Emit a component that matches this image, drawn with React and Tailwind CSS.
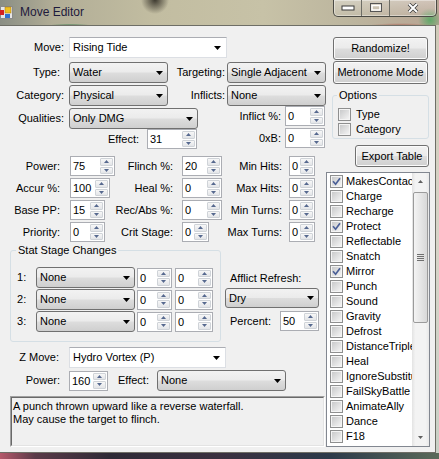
import React from "react";

const face = "bg-[linear-gradient(#f2f2f2,#ebebeb_48%,#dddddd_52%,#cfcfcf)]";

function DownArrow() {
  return (
    <svg width="7" height="4" viewBox="0 0 7 4" className="shrink-0">
      <path d="M0 0H7L3.5 4Z" fill="#000" />
    </svg>
  );
}

function DropList({ className, value }) {
  return (
    <div className={`flex shrink-0 items-center justify-between rounded-[3px] border border-[#707070] ${face} pl-[3px] pr-[4px] ${className}`}>
      <span className="whitespace-nowrap">{value}</span>
      <DownArrow />
    </div>
  );
}

function EditCombo({ className, value }) {
  return (
    <div className={`flex h-[21px] shrink-0 items-center justify-between border border-[#dcdfe4] border-t-[#abadb3] bg-white pl-[3px] pr-[5px] ${className}`}>
      <span className="whitespace-nowrap">{value}</span>
      <DownArrow />
    </div>
  );
}

function Spin({ up }) {
  return (
    <div className="flex flex-1 items-center justify-center rounded-[1px] border border-[#cfd3d8] bg-[linear-gradient(#f7f7f7,#e3e5e8)]">
      <svg width="5" height="3" viewBox="0 0 5 3">
        <path d={up ? "M0 3H5L2.5 0Z" : "M0 0H5L2.5 3Z"} fill="#56698f" />
      </svg>
    </div>
  );
}

function Nud({ className, value }) {
  return (
    <div className={`flex h-[20px] shrink-0 border border-[#abadb3] bg-white ${className}`}>
      <span className="flex-1 pl-[2px] leading-[18px]">{value}</span>
      <div className="flex w-[15px] flex-col gap-[1px] p-[1px]">
        <Spin up />
        <Spin />
      </div>
    </div>
  );
}

function Check({ checked }) {
  return (
    <span className="flex h-[13px] w-[13px] shrink-0 items-center justify-center border border-[#8e8f8f] bg-[#f4f4f4]">
      <span className="flex h-[9px] w-[9px] items-center justify-center bg-[linear-gradient(135deg,#c9cacb,#f3f3f3)]">
        {checked && (
          <svg width="9" height="9" viewBox="0 0 9 9">
            <path d="M1 4.3L3.6 7.2L8 1.2" fill="none" stroke="#4a5f97" strokeWidth="1.7" />
          </svg>
        )}
      </span>
    </span>
  );
}

function Btn({ className, children }) {
  return (
    <div className={`flex shrink-0 items-center justify-center rounded-[3px] border border-[#707070] ${face} shadow-[inset_0_0_0_1px_#fbfbfb] ${className}`}>
      {children}
    </div>
  );
}

const stats = [
  [["Power:", "75", "w-[45px]"], ["Flinch %:", "20", "w-[40px]"], ["Min Hits:", "0"]],
  [["Accur %:", "100", "w-[40px]"], ["Heal %:", "0", "w-[40px]"], ["Max Hits:", "0"]],
  [["Base PP:", "15", "w-[35px]"], ["Rec/Abs %:", "0", "w-[40px]"], ["Min Turns:", "0"]],
  [["Priority:", "0", "w-[35px]"], ["Crit Stage:", "0", "w-[27px]"], ["Max Turns:", "0"]],
];

const flags = [
  ["MakesContact", true],
  ["Charge"],
  ["Recharge"],
  ["Protect", true],
  ["Reflectable"],
  ["Snatch"],
  ["Mirror", true],
  ["Punch"],
  ["Sound"],
  ["Gravity"],
  ["Defrost"],
  ["DistanceTriple"],
  ["Heal"],
  ["IgnoreSubstitute"],
  ["FailSkyBattle"],
  ["AnimateAlly"],
  ["Dance"],
  ["F18"],
];

function TitleBar() {
  return (
    <div className="flex h-[25px] items-start bg-[radial-gradient(circle_at_155px_0px,#3e3a30_0px,transparent_14px),radial-gradient(ellipse_at_400px_25px,#b07a6a_0px,transparent_30px),radial-gradient(circle_at_430px_20px,#5fa868_0px,transparent_12px),radial-gradient(ellipse_at_70px_25px,#5a8a62_0px,transparent_20px),linear-gradient(to_right,#8a8e84,#b1ad96_12%,#c2bda1_35%,#c7c2a7_60%,#bcb59e_80%,#b8a493)]">
      <svg width="13" height="13" viewBox="0 0 13 13" className="mt-[6px] shrink-0">
        <rect x="0.5" y="0.5" width="12" height="12" fill="#e6e6e6" stroke="#8a8a8a" />
        <rect x="0" y="4" width="4" height="5" fill="#d42020" />
        <rect x="5" y="1" width="6" height="6" fill="#f0c020" stroke="#a07010" strokeWidth="0.5" />
        <rect x="5" y="8" width="5" height="4" fill="#3070d0" />
      </svg>
      <span className="ml-[7px] mt-[5px] text-[12px] leading-[14px] text-[#1e1a3c]">Move Editor</span>
      <div className="ml-auto mr-[2px] flex h-[17px] overflow-hidden rounded-b-[5px] border border-t-0 border-[#4b4b45] bg-[linear-gradient(#ffffff59,#ffffff1a)] shadow-[inset_0_0_0_1px_#ffffff66]">
        <div className="flex w-[28px] items-center justify-center border-r border-[#6d6d66]">
          <svg width="14" height="6" viewBox="0 0 14 6">
            <rect x="1" y="1" width="12" height="4" fill="#fff" stroke="#3a3a3a" />
          </svg>
        </div>
        <div className="flex w-[28px] items-start justify-center border-r border-[#6d6d66] pt-[3px]">
          <svg width="12" height="9" viewBox="0 0 12 9">
            <rect x="0.5" y="0.5" width="11" height="8" fill="none" stroke="#555" />
            <rect x="2" y="2.5" width="8" height="4.5" fill="none" stroke="#fff" strokeWidth="1.5" />
          </svg>
        </div>
        <div className="flex w-[46px] items-start justify-center pt-[3px]">
          <svg width="12" height="10" viewBox="0 0 12 10">
            <path d="M2 1L10 9M10 1L2 9" stroke="#3a3a3a" strokeWidth="3.5" />
            <path d="M2 1L10 9M10 1L2 9" stroke="#fff" strokeWidth="2" />
          </svg>
        </div>
      </div>
    </div>
  );
}

function LeftColumn() {
  return (
    <div className="flex w-[326px] flex-col">
      <div className="mt-[11px] flex h-[21px] items-center">
        <span className="w-[64px] text-right">Move:</span>
        <EditCombo className="ml-[5px] w-[158px]" value="Rising Tide" />
      </div>
      <div className="mt-[4px] flex h-[21px] items-center">
        <span className="w-[60px] text-right">Type:</span>
        <DropList className="ml-[9px] h-[21px] w-[99px]" value="Water" />
        <span className="w-[57px] text-right">Targeting:</span>
        <DropList className="ml-[2px] h-[21px] w-[99px]" value="Single Adjacent" />
      </div>
      <div className="mt-[2px] flex h-[21px] items-center">
        <span className="w-[64px] text-right">Category:</span>
        <DropList className="ml-[5px] h-[21px] w-[99px]" value="Physical" />
        <span className="w-[57px] text-right">Inflicts:</span>
        <DropList className="ml-[2px] h-[21px] w-[99px]" value="None" />
      </div>

      <div className="flex">
        <div className="flex w-[226px] flex-col">
          <div className="mt-[2px] flex h-[21px] items-center">
            <span className="w-[64px] text-right">Qualities:</span>
            <DropList className="ml-[5px] h-[21px] w-[129px]" value="Only DMG" />
          </div>
          <div className="flex h-[20px] items-center">
            <span className="w-[139px] text-right">Effect:</span>
            <Nud className="ml-[8px] w-[50px]" value="31" />
          </div>
        </div>
        <div className="flex flex-col">
          <div className="flex h-[20px] items-center">
            <span className="w-[55px] text-right">Inflict %:</span>
            <Nud className="ml-[4px] w-[40px]" value="0" />
          </div>
          <div className="mt-[2px] flex h-[20px] items-center">
            <span className="w-[55px] text-right">0xB:</span>
            <Nud className="ml-[4px] w-[40px]" value="0" />
          </div>
        </div>
      </div>

      <div className="mt-[7px] flex flex-col gap-[2px]">
        {stats.map(([a, b, c]) => (
          <div key={a[0]} className="flex h-[20px] items-center">
            <div className="flex w-[115px] items-center">
              <span className="w-[60px] text-right">{a[0]}</span>
              <Nud className={`ml-[10px] ${a[2]}`} value={a[1]} />
            </div>
            <div className="flex w-[111px] items-center">
              <span className="w-[58px] text-right">{b[0]}</span>
              <Nud className={`ml-[9px] ${b[2]}`} value={b[1]} />
            </div>
            <div className="flex items-center">
              <span className="w-[56px] text-right">{c[0]}</span>
              <Nud className="ml-[7px] w-[26px]" value={c[1]} />
            </div>
          </div>
        ))}
      </div>

      <div className="mt-[2px] flex">
        <fieldset className="ml-[10px] w-[211px] rounded-[3px] border border-[#d5dfe5] pb-[9px]">
          <legend className="ml-[5px] px-[2px]">Stat Stage Changes</legend>
          <div className="mt-[10px] flex flex-col gap-[1px]">
            {[1, 2, 3].map((n) => (
              <div key={n} className="flex h-[21px] items-center">
                <span className="ml-[6px] w-[19px]">{n}:</span>
                <DropList className="h-[21px] w-[99px]" value="None" />
                <Nud className="ml-[2px] w-[35px]" value="0" />
                <Nud className="ml-[3px] w-[38px]" value="0" />
              </div>
            ))}
          </div>
        </fieldset>
        <div className="ml-[4px] flex flex-col">
          <span className="mt-[28px] pl-[5px]">Afflict Refresh:</span>
          <DropList className="mt-[3px] h-[20px] w-[94px]" value="Dry" />
          <div className="mt-[3px] flex h-[20px] items-center">
            <span className="w-[55px] pl-[5px]">Percent:</span>
            <Nud className="w-[39px]" value="50" />
          </div>
        </div>
      </div>

      <div className="mt-[5px] flex h-[21px] items-center">
        <span className="w-[59px] text-right">Z Move:</span>
        <EditCombo className="ml-[10px] w-[157px]" value="Hydro Vortex (P)" />
      </div>
      <div className="mt-[2px] flex h-[21px] items-center">
        <span className="w-[60px] text-right">Power:</span>
        <Nud className="ml-[9px] w-[39px]" value="160" />
        <span className="ml-[10px] w-[39px]">Effect:</span>
        <DropList className="h-[21px] w-[129px]" value="None" />
      </div>
      <div className="ml-[10px] mt-[5px] h-[51px] w-[315px] border border-b-white border-l-[#a0a0a0] border-r-white border-t-[#a0a0a0]">
        <div className="h-full border border-b-[#e3e3e3] border-l-[#696969] border-r-[#e3e3e3] border-t-[#696969] pl-[1px] pt-[2px]">
          <p>A punch thrown upward like a reverse waterfall.</p>
          <p>May cause the target to flinch.</p>
        </div>
      </div>
    </div>
  );
}

function ScrollArrow({ up }) {
  return (
    <div className="flex h-[17px] items-center justify-center">
      <svg width="5" height="3" viewBox="0 0 5 3">
        <path d={up ? "M0 3H5L2.5 0Z" : "M0 0H5L2.5 3Z"} fill="#606060" />
      </svg>
    </div>
  );
}

function RightColumn() {
  return (
    <div className="flex w-[109px] flex-col">
      <Btn className="ml-[7px] mt-[11px] h-[23px] w-[95px]">Randomize!</Btn>
      <Btn className="ml-[7px] mt-[1px] h-[23px] w-[95px]">Metronome Mode</Btn>
      <fieldset className="ml-[6px] mt-[5px] w-[97px] rounded-[3px] border border-[#d5dfe5] pb-[2px]">
        <legend className="ml-[4px] px-[2px]">Options</legend>
        <div className="ml-[5px] mt-[6px] flex flex-col gap-[2px]">
          <div className="flex h-[13px] items-center">
            <Check />
            <span className="ml-[5px]">Type</span>
          </div>
          <div className="flex h-[13px] items-center">
            <Check />
            <span className="ml-[5px]">Category</span>
          </div>
        </div>
      </fieldset>
      <Btn className="ml-[29px] mt-[6px] h-[22px] w-[74px]">Export Table</Btn>
      <div className="mt-[5px] flex h-[275px] w-[104px] border border-[#828790] bg-white">
        <div className="flex min-w-0 flex-1 flex-col overflow-hidden pt-[1px]">
          {flags.map(([name, on]) => (
            <div key={name} className="flex h-[15px] shrink-0 items-center pl-[3px]">
              <Check checked={on} />
              <span className="ml-[3px]">{name}</span>
            </div>
          ))}
        </div>
        <div className="flex w-[17px] shrink-0 flex-col bg-[linear-gradient(to_right,#e3e3e3,#f3f3f3_20%,#f3f3f3_80%,#e8e8e8)]">
          <ScrollArrow up />
          <div className="mx-[1px] mt-[2px] flex h-[131px] items-center justify-center rounded-[2px] border border-[#9b9b9b] bg-[linear-gradient(to_right,#f4f4f4,#e6e6e6_50%,#d8d8d8)]">
            <svg width="7" height="7" viewBox="0 0 7 7">
              <path d="M0 0.5H7M0 2.5H7M0 4.5H7M0 6.5H7" stroke="#6f6f6f" strokeWidth="1" />
            </svg>
          </div>
          <div className="flex-1" />
          <ScrollArrow />
        </div>
      </div>
    </div>
  );
}

export default function App() {
  return (
    <div className="h-[459px] w-[439px] overflow-hidden whitespace-nowrap bg-[#b8b6a4] font-['Liberation_Sans',Arial,sans-serif] text-[11px] leading-[13px] text-black">
      <TitleBar />
      <div className="flex">
        <div className="flex h-[428px] w-[436px] border border-l-0 border-[#6e6e66] bg-[#f0f0f0]">
          <LeftColumn />
          <RightColumn />
        </div>
        <div className="w-[3px] bg-[linear-gradient(#cfcab8,#d7d4c8_50%,#c9d0c6)]" />
      </div>
      <div className="h-[6px] bg-[linear-gradient(to_right,#b4586a,#5a3a48_8%,#2e2a36_25%,#3a3040_50%,#2c3a4a_75%,#5a6a5a)]" />
    </div>
  );
}
